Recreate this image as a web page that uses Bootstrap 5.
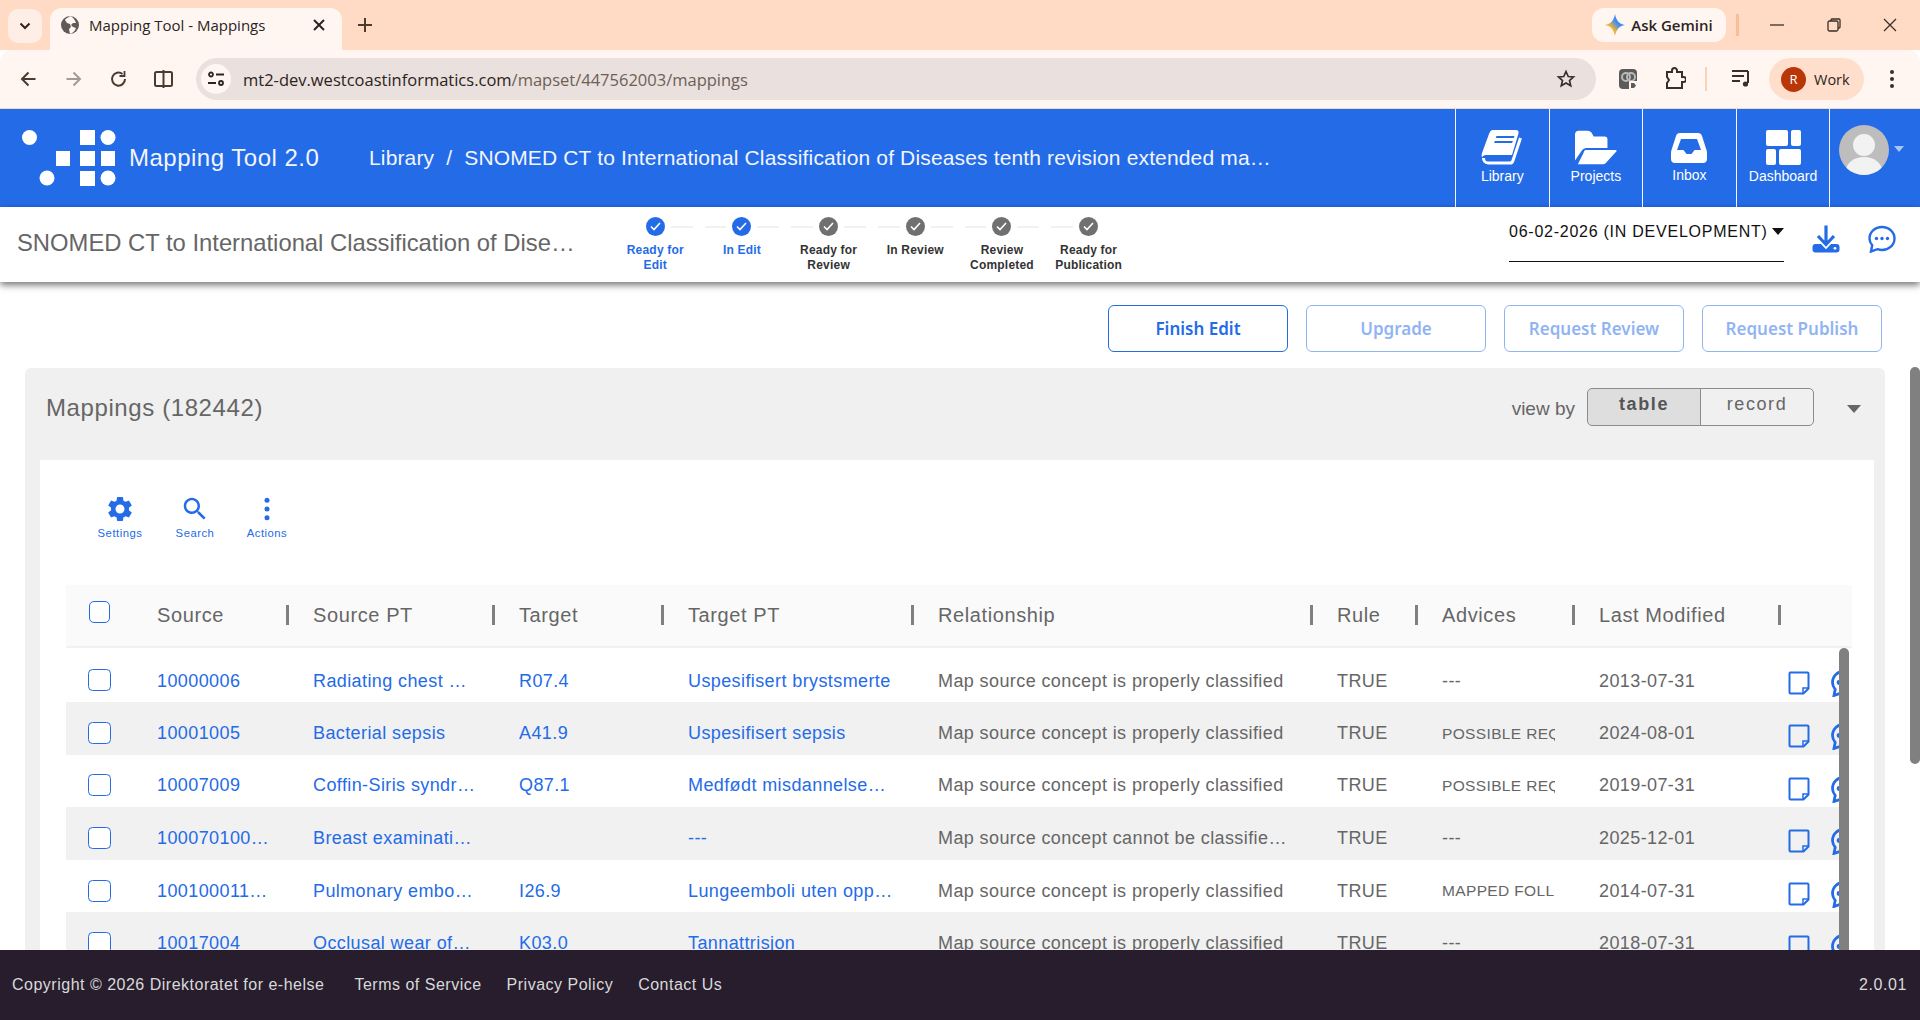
<!DOCTYPE html>
<html lang="en">
<head>
<meta charset="utf-8">
<title>Mapping Tool - Mappings</title>
<link href="https://cdn.jsdelivr.net/npm/bootstrap@5.3.0/dist/css/bootstrap.min.css" rel="stylesheet">
<style>
:root{--brand:#246be8;--chrome-ink:#4a3a30;--ui:"Liberation Sans",Arial,sans-serif;--seg:"Open Sans","Noto Sans",sans-serif}
html,body{height:100%;overflow:hidden}
body{font-family:var(--ui);background:#fff;color:#666}
.flex-none{flex:none}
.app-shell{height:1020px}
.tabstrip{height:50px;background:#ffdbc6;padding:8px 0 0 8px}
.tab-menu{width:34px;height:34px;margin:1px 8px 0 0;border-radius:10px;background:#ffeee5}
.tab-active{width:292px;height:42px;border-radius:12px 12px 0 0;background:#fff6f2;padding:0 16px 8px 10px;font:400 15px var(--seg);color:#2b2420}
.tab-active .tab-label{margin-left:1px}
.tab-plus{margin-left:4px;margin-top:-1px}
.gem-pill{height:34px;width:134px;margin-right:10px;background:#fff6f2;border-radius:12px;font:600 15px var(--seg);color:#2b2420;gap:6px}
.tb-sep{width:3px;height:22px;background:#fbbd94;margin:6px 31px 0 0}
.win-ctl{gap:42.5px;margin:10px 23px 0 0}
.toolbar{height:59px;background:#fff6f2;border-bottom:1px solid #ead9cf;border-radius:12px 12px 0 0;padding:0 0 0 15px}
.nav-ico{width:27px;margin-right:18px}
.nav-ico.last{margin-right:19px}
.omnibox{width:1400px;height:42px;background:#eae0dd;border-radius:21px;padding:0 20px 0 5px;font:400 16.5px var(--seg);color:#6d5f58}
.omnibox b{font-weight:400;color:#2b2420}
.site-chip{width:30px;height:30px;border-radius:50%;background:#fff6f2;margin-right:12px}
.ext-a{margin-left:22px}
.ext-b{margin-left:24px}
.tb-thin{height:24px;width:2px;margin:0 0 0 19px;background:#fbd2b8}
.ext-c{margin-left:24px}
.work-pill{width:95px;height:42px;background:#ffdfcc;border-radius:21px;margin-left:16px;padding-left:12px;font:400 14.5px var(--seg);color:#2b2420;gap:8px}
.avatar-r{width:25px;height:25px;border-radius:50%;background:#b93608;color:#fff;font-size:13px}
.ext-d{margin-left:25px}
.app-bar{height:98px;background:var(--brand);padding:0;flex-wrap:nowrap}
.brand-mark{margin-left:22px;width:94px;height:56px;flex:none}
.brand-name{font-size:24px;color:#f2f6ff;margin:0 0 0 13px;width:240px;flex:none;padding:0;letter-spacing:.5px}
.crumbs{margin:0;font-size:21px;width:930px;flex-wrap:nowrap;letter-spacing:.15px;--bs-breadcrumb-divider-color:#eaf0ff;--bs-breadcrumb-item-padding-x:12px}
.crumbs .breadcrumb-item,.crumbs a{color:#f2f6ff;text-decoration:none;white-space:nowrap}
.crumbs .breadcrumb-item::before{color:#f2f6ff}
.crumbs .trail-long{width:843px;overflow:hidden;display:flex}
.crumbs .trail-long span{overflow:hidden;text-overflow:ellipsis}
.menu-wrap{width:465px}
.menu-item{width:93.6px;height:98px;border-left:1px solid #f4f7ff;color:#fff;font-size:14px;padding-top:21px;text-decoration:none;flex:none}
.menu-item svg{display:block;height:35px;margin-bottom:1px}
.menu-item svg.tray{height:30px;margin:3px 0 2px}
.profile{border-left:1px solid #f4f7ff;height:98px;flex:1;padding:16px 0 0 9px;gap:5px}
.avatar-img{width:50px;height:50px;flex:none}
.caret-pale{width:0;height:0;border:5px solid transparent;border-top:6px solid #a9c4f5;border-bottom:0;margin-top:21px}
.subhead{height:75px;background:#fff;box-shadow:0 3px 7px rgba(0,0,0,.55);position:relative;z-index:2;flex:none}
.map-title{width:612px;padding:0 37px 0 17px;font-size:23.8px;color:#666;flex:none;margin-top:-3px}
.stepper{width:520px;flex:none;padding-top:10px;align-self:flex-start}
.step{width:86.66px;font-size:12px;line-height:15px;text-align:center;font-weight:700;color:#333;letter-spacing:.2px}
.step-top{height:19px;margin-bottom:7px}
.step-line{flex:1;height:2px;background:#f1f1f1;margin:0 6px}
.step-line.off{background:transparent}
.step-dot{width:19px;height:19px;flex:none;border-radius:50%;background:#707070}
.step.on{color:var(--brand)}
.step.on .step-dot{background:var(--brand)}
.version-pick{width:275px;height:55px;margin-left:377px;border-bottom:1px solid #111;color:#111;font-size:16px;letter-spacing:.75px;padding-top:15px;line-height:20px;flex:none;align-self:flex-start}
.caret-ink{width:0;height:0;border:6px solid transparent;border-top:7px solid #111;border-bottom:0;margin:6px 0 0 4px;flex:none}
.sub-acts{margin-left:28px;gap:28px;margin-top:-11px}
.page-row{min-height:0;overflow:hidden}
.page-main{width:1910px;padding:23px 25px 0;flex:none}
.act-row{gap:18px;padding-right:3px;margin-bottom:16px}
.act-btn{width:180px;height:47px;font:600 17px "Noto Sans",sans-serif;--bs-btn-color:var(--brand);--bs-btn-border-color:var(--brand);--bs-btn-border-radius:6px;--bs-btn-disabled-color:var(--brand);--bs-btn-disabled-border-color:var(--brand);--bs-btn-disabled-opacity:.5}
.panel{background:#f0f0f0;border-radius:6px 6px 0 0;padding:0 11px 0 15px}
.panel-top{height:92px;padding:0 0 12px 6px}
.panel-title{font-size:24px;color:#666;margin:0;font-weight:400;letter-spacing:.6px}
.view-by{font-size:19px;color:#666;margin-right:12px;margin-top:3px}
.view-group{width:228px;height:38px;margin-top:-2px;margin-right:-1px}
.view-group .view-btn{flex:0 0 50%;font-size:18px;letter-spacing:1.6px;color:#666;--bs-btn-border-color:#8c8c8c;--bs-btn-border-radius:5px;padding:0 0 5px;background:#f0f0f0}
.view-group .view-btn.sel{background:#dedede;font-weight:700;color:#555}
.caret-grey{width:0;height:0;border:7px solid transparent;border-top:8px solid #666;border-bottom:0;margin:1px 13px 0 33px}
.sheet{background:#fff;padding:0 22px 0 26px;height:600px}
.tools{height:125px;padding:34px 0 0 24px}
.tool{width:60px;color:var(--brand);font-size:11.3px;text-align:center;letter-spacing:.5px;text-decoration:none;line-height:14px}
.tool svg{display:block;margin:0 auto 2px}
.tool.tool-s{margin-left:15px}
.tool.tool-b{margin-left:12px}
.grid-cols col:nth-child(1){width:79px}
.grid-cols col:nth-child(2){width:156px}
.grid-cols col:nth-child(3){width:206px}
.grid-cols col:nth-child(4){width:169px}
.grid-cols col:nth-child(5){width:250px}
.grid-cols col:nth-child(6){width:399px}
.grid-cols col:nth-child(7){width:105px}
.grid-cols col:nth-child(8){width:157px}
.grid-cols col:nth-child(9){width:200px}
.grid-cols col:nth-child(10){width:65px}
.data-head{width:1786px;table-layout:fixed;margin:0;border-collapse:collapse}
.data-head th{height:62px;background:#fafafa;border-bottom:2px solid #f1f1f1;font-weight:400;font-size:20px;color:#666;padding:0 12px 2px 12px;letter-spacing:.6px;vertical-align:middle}
.data-head th.cb-cell{padding:0 0 0 23px}
.data-head th.tight{padding-right:6px}
.col-sep{width:3px;height:20px;background:#808080;flex:none}
.body-row{height:400px}
.body-clip{width:1773px;overflow:hidden;flex:none}
.data-body{width:1786px;table-layout:fixed;margin:0;border-collapse:collapse}
.data-body td{height:52.6px;padding:10px 12px 0;font-size:18px;color:#666;letter-spacing:.4px;border:0;white-space:nowrap;overflow:hidden;vertical-align:middle}
.data-body tr:nth-child(even) td{background:#f1f1f1}
.data-body a{color:var(--brand);text-decoration:none}
.data-body tr:first-child td{height:54px;padding-top:12px}
.data-body tr td.cb-cell{padding:14px 0 0 22px}
.data-body tr td.ico-cell{padding:16px 0 0}
.advice{width:113px;overflow:hidden;font-size:15.5px;letter-spacing:.35px}
.tick{width:23px;height:22px;margin:0;border:1px solid var(--brand);border-radius:4px;background-color:#fff;float:none}
.data-head .tick{width:21px;margin-bottom:5px}
.cell-icons{gap:21px;width:80px}
.thumb-in{width:10px;flex:none;background:#808080;border-radius:5px 5px 0 0}
.thumb-out{width:10px;height:397px;margin-top:85px;background:#808080;border-radius:5px;flex:none}
.site-foot{height:70px;flex:none;background:#271d2d;color:#d9d9d9;font-size:16px;letter-spacing:.5px;padding:0 13px 0 12px}
.site-foot a{color:#d9d9d9;text-decoration:none;margin-left:25px}
.site-foot a:first-of-type{margin-left:30px}
.site-foot .ver{letter-spacing:.6px}
</style>
</head>
<body>
<div class="app-shell d-flex flex-column">

  <div class="tabstrip d-flex flex-none">
    <div class="tab-menu d-flex align-items-center justify-content-center">
      <svg width="14" height="14" viewBox="0 0 14 14" fill="none" stroke="#2b2420" stroke-width="2"><path d="M2.5 4.5 7 9l4.5-4.5"/></svg>
    </div>
    <div class="tab-active d-flex align-items-center">
      <svg width="20" height="20" viewBox="0 0 20 20" class="me-2 flex-none"><circle cx="10" cy="10" r="9" fill="#5f5a57"/><path d="M10 1c-2 2-4 2-5 4l2 3 3 1 1 3-2 2 1 5c3-1 5-3 6-6l-3-1-2-2 2-2 3 0c-1-3-3-6-6-7z" fill="#fff6f2"/></svg>
      <span class="tab-label flex-grow-1">Mapping Tool - Mappings</span>
      <svg width="14" height="14" viewBox="0 0 14 14" stroke="#2b2420" stroke-width="2"><path d="M2 2l10 10M12 2 2 12"/></svg>
    </div>
    <svg class="tab-plus" width="38" height="36" viewBox="0 0 38 36" stroke="#4a3a30" stroke-width="2"><path d="M19 11v14M12 18h14"/></svg>
    <div class="ms-auto d-flex align-items-start">
      <div class="gem-pill d-flex align-items-center justify-content-center">
        <svg width="20" height="22" viewBox="0 0 20 22"><defs><linearGradient id="gm" x1="0" y1="1" x2="1" y2="0"><stop offset="0" stop-color="#e8463f"/><stop offset=".35" stop-color="#f2b632"/><stop offset=".6" stop-color="#3f8df5"/><stop offset="1" stop-color="#3f6af5"/></linearGradient></defs><path d="M10 0c1 6 4 10 10 11-6 1-9 5-10 11C9 16 6 12 0 11 6 10 9 6 10 0z" fill="url(#gm)"/></svg>
        <span>Ask Gemini</span>
      </div>
      <div class="tb-sep"></div>
      <div class="win-ctl d-flex align-items-center">
        <svg width="14" height="14" viewBox="0 0 14 14" stroke="#3a2f28" stroke-width="1.3"><path d="M0 7h14"/></svg>
        <svg width="14" height="14" viewBox="0 0 14 14" fill="none" stroke="#3a2f28" stroke-width="1.3"><rect x="1" y="3" width="10" height="10" rx="1.5"/><path d="M4 3V2a1 1 0 0 1 1-1h7a1 1 0 0 1 1 1v7a1 1 0 0 1-1 1h-1"/></svg>
        <svg width="14" height="14" viewBox="0 0 14 14" stroke="#3a2f28" stroke-width="1.3"><path d="M1 1l12 12M13 1 1 13"/></svg>
      </div>
    </div>
  </div>

  <div class="toolbar d-flex align-items-center flex-none">
    <svg class="nav-ico" width="20" height="20" viewBox="0 0 20 20" fill="none" stroke="#4a3a30" stroke-width="2"><path d="M17 10H4M10 3.5 3.5 10l6.5 6.500"/></svg>
    <svg class="nav-ico" width="20" height="20" viewBox="0 0 20 20" fill="none" stroke="#a59a93" stroke-width="2"><path d="M3 10h13M10 3.5l6.5 6.5-6.5 6.5"/></svg>
    <svg class="nav-ico" width="20" height="20" viewBox="0 0 20 20" fill="none" stroke="#4a3a30" stroke-width="2"><path d="M16.5 10A6.5 6.500 0 1 1 14 5"/><path d="M16 2v5h-5" stroke-width="1.8"/></svg>
    <svg class="nav-ico last" width="20" height="20" viewBox="0 0 20 20" fill="none" stroke="#4a3a30" stroke-width="2"><rect x="1.5" y="3" width="17" height="14" rx="1.5"/><path d="M10 1v18"/></svg>
    <div class="omnibox d-flex align-items-center flex-none">
      <span class="site-chip d-flex align-items-center justify-content-center flex-none">
        <svg width="18" height="16" viewBox="0 0 18 16" fill="none" stroke="#2b2420" stroke-width="1.8"><circle cx="4" cy="3.5" r="2"/><path d="M9 3.5h8M1 12h8"/><circle cx="14" cy="12" r="2"/></svg>
      </span>
      <span class="flex-grow-1"><b>mt2-dev.westcoastinformatics.com</b>/mapset/447562003/mappings</span>
      <svg width="20" height="20" viewBox="0 0 24 24" fill="none" stroke="#3a2f28" stroke-width="2"><path d="M12 3l2.7 6 6.3.6-4.8 4.2 1.5 6.4L12 16.8l-5.700 3.4 1.5-6.4L3 9.600 9.300 9z"/></svg>
    </div>
    <svg class="ext-a flex-none" width="22" height="24" viewBox="0 0 22 24"><rect x="1" y="2" width="18" height="20" rx="4" fill="#5b5b5b"/><circle cx="8" cy="10" r="4" fill="none" stroke="#b9b9b9" stroke-width="2"/><circle cx="13" cy="10" r="4" fill="none" stroke="#b9b9b9" stroke-width="2"/><rect x="11" y="14" width="9" height="9" rx="1" fill="#fff6f2"/><path d="M13 16v5h3l2-2.500-2-2.500z" fill="#5b5b5b"/></svg>
    <svg class="ext-b flex-none" width="22" height="24" viewBox="0 0 22 24" fill="none" stroke="#3a2f28" stroke-width="2"><path d="M3 5h5V3.500a2.500 2.500 0 0 1 5 0V5h5v5h1.500a2.500 2.500 0 0 1 0 5H18v6H3v-5l2-3-2-3z"/></svg>
    <div class="tb-thin flex-none"></div>
    <svg class="ext-c flex-none" width="22" height="20" viewBox="0 0 22 20" fill="none" stroke="#3a2f28" stroke-width="2"><path d="M1 2h16M1 7h12M1 12h8"/><path d="M17 2v12"/><circle cx="14.5" cy="15" r="2.6" fill="#3a2f28" stroke="none"/></svg>
    <div class="work-pill d-flex align-items-center flex-none">
      <span class="avatar-r d-flex align-items-center justify-content-center">R</span><span>Work</span>
    </div>
    <svg class="ext-d flex-none" width="6" height="20" viewBox="0 0 6 20" fill="#3a2f28"><circle cx="3" cy="3" r="2"/><circle cx="3" cy="10" r="2"/><circle cx="3" cy="17" r="2"/></svg>
  </div>

  <nav class="navbar app-bar flex-none">
    <svg class="brand-mark" viewBox="0 0 94 56" fill="#fff">
      <circle cx="7.5" cy="7.5" r="7.5"/><rect x="58" y="0" width="15" height="15"/><circle cx="86" cy="7.5" r="7.5"/>
      <rect x="34" y="21" width="14" height="15"/><rect x="58" y="21" width="15" height="15"/><rect x="79" y="21" width="14" height="15"/>
      <circle cx="25" cy="48" r="7.5"/><rect x="58" y="41" width="15" height="15"/><circle cx="86" cy="48" r="7.5"/>
    </svg>
    <span class="navbar-brand brand-name">Mapping Tool 2.0</span>
    <ol class="breadcrumb crumbs">
      <li class="breadcrumb-item"><a href="#">Library</a></li>
      <li class="breadcrumb-item active trail-long"><span>SNOMED CT to International Classification of Diseases tenth revision extended mapping set</span></li>
    </ol>
    <div class="menu-wrap d-flex align-items-start ms-auto flex-none">
      <a href="#" class="menu-item d-flex flex-column align-items-center">
        <svg width="42" height="35" viewBox="0 0 42 35"><path fill="#fff" d="M12 0h23c2 0 3 1.500 2.500 3.500L31 25H5c-2 0-3.500 1-4 2.500C.5 26 .5 25 1 23L8 4C9 1.500 10 0 12 0z"/><path fill="none" stroke="#fff" stroke-width="3" d="M2.500 28c0 2.500 1.500 5 4.500 5h22c1.500 0 2.500-.7 3-2.500L39.500 8"/><path fill="#246be8" d="M15.500 6h18l-.7 2h-18zM13.800 11h18l-.7 2h-18z"/></svg>
        Library
      </a>
      <a href="#" class="menu-item d-flex flex-column align-items-center">
        <svg width="42" height="35" viewBox="0 0 44 35" fill="#fff"><path d="M0 4a4 4 0 0 1 4-4h9c3 0 4 1.500 5 3l1.500 3H31a3 3 0 0 1 3 3v9H12c-2 0-3.500 1-5 3L0 31z"/><path d="M11 20h31c1.500 0 2 .7 1.500 1.500L33 33c-1 1.300-2 2-3.500 2H3l6-12c.5-1.500 1-3 2-3z"/></svg>
        Projects
      </a>
      <a href="#" class="menu-item d-flex flex-column align-items-center">
        <svg class="tray" width="36" height="30" viewBox="0 0 36 30" fill="#fff"><path fill-rule="evenodd" d="M9 0h18c2 0 3.500 1 4 3l4.500 14c.3 1 .5 2 .5 3v6c0 2.500-1.500 4-4 4H4c-2.500 0-4-1.500-4-4v-6c0-1 .2-2 .5-3L5 3c.5-2 2-3 4-3zM10 6 6 17h6.500l3 4h5l3-4H30L26 6z"/></svg>
        Inbox
      </a>
      <a href="#" class="menu-item d-flex flex-column align-items-center">
        <svg width="35" height="35" viewBox="0 0 35 35" fill="#fff"><rect width="22" height="16" rx="2"/><rect x="25" width="10" height="16" rx="2"/><rect y="19" width="10" height="16" rx="2"/><rect x="13" y="19" width="22" height="16" rx="2"/></svg>
        Dashboard
      </a>
      <div class="profile d-flex align-items-start">
        <svg class="avatar-img" viewBox="0 0 50 50"><defs><clipPath id="av"><circle cx="25" cy="25" r="25"/></clipPath></defs><circle cx="25" cy="25" r="25" fill="#bdbdbd"/><g clip-path="url(#av)" fill="#f2f2f2"><circle cx="25" cy="20" r="11"/><ellipse cx="25" cy="46" rx="18" ry="14"/></g></svg>
        <span class="caret-pale"></span>
      </div>
    </div>
  </nav>

  <header class="subhead d-flex align-items-center">
    <div class="map-title text-truncate">SNOMED CT to International Classification of Diseases tenth revision extended mapping set</div>
    <div class="stepper d-flex">
      <div class="step on"><div class="step-top d-flex align-items-center"><i class="step-line off"></i><span class="step-dot d-flex align-items-center justify-content-center"><svg width="11" height="9" viewBox="0 0 11 9" fill="none" stroke="#fff" stroke-width="1.6"><path d="M1 4.500 4 7.500 10 1"/></svg></span><i class="step-line"></i></div>Ready for<br>Edit</div>
      <div class="step on"><div class="step-top d-flex align-items-center"><i class="step-line"></i><span class="step-dot d-flex align-items-center justify-content-center"><svg width="11" height="9" viewBox="0 0 11 9" fill="none" stroke="#fff" stroke-width="1.6"><path d="M1 4.500 4 7.500 10 1"/></svg></span><i class="step-line"></i></div>In Edit</div>
      <div class="step"><div class="step-top d-flex align-items-center"><i class="step-line"></i><span class="step-dot d-flex align-items-center justify-content-center"><svg width="11" height="9" viewBox="0 0 11 9" fill="none" stroke="#fff" stroke-width="1.6"><path d="M1 4.500 4 7.500 10 1"/></svg></span><i class="step-line"></i></div>Ready for<br>Review</div>
      <div class="step"><div class="step-top d-flex align-items-center"><i class="step-line"></i><span class="step-dot d-flex align-items-center justify-content-center"><svg width="11" height="9" viewBox="0 0 11 9" fill="none" stroke="#fff" stroke-width="1.6"><path d="M1 4.500 4 7.500 10 1"/></svg></span><i class="step-line"></i></div>In Review</div>
      <div class="step"><div class="step-top d-flex align-items-center"><i class="step-line"></i><span class="step-dot d-flex align-items-center justify-content-center"><svg width="11" height="9" viewBox="0 0 11 9" fill="none" stroke="#fff" stroke-width="1.6"><path d="M1 4.500 4 7.500 10 1"/></svg></span><i class="step-line"></i></div>Review<br>Completed</div>
      <div class="step"><div class="step-top d-flex align-items-center"><i class="step-line"></i><span class="step-dot d-flex align-items-center justify-content-center"><svg width="11" height="9" viewBox="0 0 11 9" fill="none" stroke="#fff" stroke-width="1.6"><path d="M1 4.500 4 7.500 10 1"/></svg></span><i class="step-line off"></i></div>Ready for<br>Publication</div>
    </div>
    <div class="version-pick d-flex align-items-start"><span class="text-nowrap">06-02-2026 (IN DEVELOPMENT)</span><span class="caret-ink"></span></div>
    <div class="sub-acts d-flex align-items-center">
      <svg width="28" height="28" viewBox="0 0 28 28"><rect x=".5" y="19" width="27" height="8.500" rx="3" fill="#246be8"/><circle cx="23" cy="23.300" r="1.400" fill="#fff"/><path d="M6 11l8 8.500 8-8.500" fill="none" stroke="#fff" stroke-width="6.500"/><path d="M14 .5V20M6 11l8 8.500 8-8.500" fill="none" stroke="#246be8" stroke-width="3.200"/></svg>
      <svg width="28" height="28" viewBox="0 0 28 28" fill="none" stroke="#246be8" stroke-width="2.400"><path d="M14 2c7 0 12.500 5 12.500 11.500S21 25 14 25c-1.500 0-3-.3-4.500-.8L3 26.500l1.200-6.200C2.500 18.300 1.500 16 1.500 13.500 1.500 7 7 2 14 2z"/><g fill="#246be8" stroke="none"><circle cx="8.500" cy="13.500" r="1.700"/><circle cx="14" cy="13.500" r="1.700"/><circle cx="19.500" cy="13.500" r="1.700"/></g></svg>
    </div>
  </header>

  <div class="page-row d-flex flex-grow-1">
    <main class="page-main">
      <div class="act-row d-flex justify-content-end">
        <button class="btn btn-outline-primary act-btn" type="button">Finish Edit</button>
        <button class="btn btn-outline-primary act-btn" type="button" disabled>Upgrade</button>
        <button class="btn btn-outline-primary act-btn" type="button" disabled>Request Review</button>
        <button class="btn btn-outline-primary act-btn" type="button" disabled>Request Publish</button>
      </div>
      <section class="panel">
        <div class="panel-top d-flex align-items-center">
          <h2 class="panel-title">Mappings (182442)</h2>
          <span class="view-by ms-auto">view by</span>
          <div class="btn-group view-group" role="group">
            <button type="button" class="btn view-btn sel">table</button>
            <button type="button" class="btn view-btn">record</button>
          </div>
          <span class="caret-grey"></span>
        </div>
        <div class="sheet">
          <div class="tools d-flex align-items-start">
            <a href="#" class="tool"><svg width="30" height="30" viewBox="0 0 24 24" fill="#246be8"><path d="M19.14 12.940c.04-.3.06-.61.06-.94 0-.32-.02-.64-.07-.94l2.030-1.580c.18-.14.23-.41.12-.61l-1.920-3.320c-.12-.22-.37-.29-.59-.22l-2.390.96c-.5-.38-1.030-.7-1.620-.94l-.36-2.540c-.04-.24-.24-.41-.48-.41h-3.840c-.24 0-.43.17-.47.41l-.36 2.540c-.59.24-1.130.57-1.620.94l-2.390-.96c-.22-.08-.47 0-.59.22L2.740 8.870c-.12.21-.08.47.12.61l2.030 1.580c-.05.3-.09.63-.09.94s.02.64.07.94l-2.030 1.580c-.18.14-.23.41-.12.61l1.920 3.320c.12.22.37.29.59.22l2.390-.96c.5.38 1.030.7 1.620.94l.36 2.540c.05.24.24.41.48.41h3.840c.24 0 .44-.17.47-.41l.36-2.540c.59-.24 1.130-.56 1.620-.94l2.390.96c.22.08.47 0 .59-.22l1.920-3.320c.12-.22.07-.47-.12-.61l-2.010-1.580zM12 15.600c-1.980 0-3.600-1.620-3.600-3.600s1.620-3.600 3.600-3.600 3.600 1.620 3.600 3.600-1.620 3.600-3.600 3.600z"/></svg>Settings</a>
            <a href="#" class="tool tool-s"><svg width="30" height="30" viewBox="0 0 24 24" fill="#246be8"><path d="M15.500 14h-.79l-.28-.27C15.410 12.590 16 11.110 16 9.500 16 5.910 13.090 3 9.500 3S3 5.910 3 9.500 5.910 16 9.500 16c1.610 0 3.090-.59 4.230-1.570l.27.28v.79l5 4.990L20.490 19l-4.990-5zm-6 0C7.010 14 5 11.990 5 9.500S7.010 5 9.500 5 14 7.010 14 9.500 11.990 14 9.500 14z"/></svg>Search</a>
            <a href="#" class="tool tool-b"><svg width="30" height="30" viewBox="0 0 24 24" fill="#246be8"><circle cx="12" cy="5" r="2"/><circle cx="12" cy="12" r="2"/><circle cx="12" cy="19" r="2"/></svg>Actions</a>
          </div>
          <table class="table data-head grid-cols">
            <colgroup><col><col><col><col><col><col><col><col><col><col></colgroup>
            <thead><tr>
              <th class="cb-cell"><input class="form-check-input tick" type="checkbox" aria-label="Select all"></th>
              <th><div class="d-flex justify-content-between align-items-center">Source<i class="col-sep"></i></div></th>
              <th><div class="d-flex justify-content-between align-items-center">Source PT<i class="col-sep"></i></div></th>
              <th><div class="d-flex justify-content-between align-items-center">Target<i class="col-sep"></i></div></th>
              <th><div class="d-flex justify-content-between align-items-center">Target PT<i class="col-sep"></i></div></th>
              <th><div class="d-flex justify-content-between align-items-center">Relationship<i class="col-sep"></i></div></th>
              <th><div class="d-flex justify-content-between align-items-center">Rule<i class="col-sep"></i></div></th>
              <th><div class="d-flex justify-content-between align-items-center">Advices<i class="col-sep"></i></div></th>
              <th class="tight"><div class="d-flex justify-content-between align-items-center">Last Modified<i class="col-sep"></i></div></th>
              <th></th>
            </tr></thead>
          </table>
          <div class="body-row d-flex">
            <div class="body-clip">
              <table class="table data-body grid-cols">
                <colgroup><col><col><col><col><col><col><col><col><col><col></colgroup>
                <tbody id="rows"></tbody>
              </table>
            </div>
            <div class="thumb-in"></div>
          </div>
        </div>
      </section>
    </main>
    <div class="thumb-out"></div>
  </div>

  <footer class="site-foot d-flex align-items-center">
    <span>Copyright © 2026 Direktoratet for e-helse</span>
    <a href="#">Terms of Service</a><a href="#">Privacy Policy</a><a href="#">Contact Us</a>
    <span class="ver ms-auto">2.0.01</span>
  </footer>
</div>
<script src="https://cdn.jsdelivr.net/npm/bootstrap@5.3.0/dist/js/bootstrap.bundle.min.js"></script>
<script>
const OK='Map source concept is properly classified';
const data=[
['10000006','Radiating chest …','R07.4','Uspesifisert brystsmerte',OK,'---','2013-07-31'],
['10001005','Bacterial sepsis','A41.9','Uspesifisert sepsis',OK,'POSSIBLE REQUIREMENT FOR ADDITIONAL CODE','2024-08-01'],
['10007009','Coffin-Siris syndr…','Q87.1','Medfødt misdannelse…',OK,'POSSIBLE REQUIREMENT FOR ADDITIONAL CODE','2019-07-31'],
['100070100…','Breast examinati…','','---','Map source concept cannot be classifie…','---','2025-12-01'],
['100100011…','Pulmonary embo…','I26.9','Lungeemboli uten opp…',OK,'MAPPED FOLLOWING WHO GUIDANCE','2014-07-31'],
['10017004','Occlusal wear of…','K03.0','Tannattrisjon',OK,'---','2018-07-31']];
const note='<svg class="flex-none" width="23" height="24" viewBox="0 0 23 24" fill="none" stroke="#246be8" stroke-width="2"><path d="M2.500 1.500h18a1 1 0 0 1 1 1v15l-5 5h-13a1 1 0 0 1-1-1v-19a1 1 0 0 1 1-1z"/><path d="M16 22.500v-5.500h5.500" stroke-width="1.500"/></svg>';
const chat='<svg class="flex-none" width="28" height="28" viewBox="0 0 28 28" fill="none" stroke="#246be8" stroke-width="2.800"><path d="M14 2c7 0 12.500 5 12.500 11.500S21 25 14 25c-1.500 0-3-.3-4.500-.8L3 26.500l1.200-6.200C2.500 18.300 1.500 16 1.500 13.500 1.500 7 7 2 14 2z"/><circle cx="8" cy="13.500" r="1" fill="#246be8"/></svg>';
document.getElementById('rows').innerHTML=data.map(r=>{
  const adv=r[5].length>3?'<div class="advice">'+r[5]+'</div>':r[5];
  return '<tr><td class="cb-cell"><input class="form-check-input tick" type="checkbox" aria-label="Select row"></td>'
  +'<td><a href="#">'+r[0]+'</a></td><td><a href="#">'+r[1]+'</a></td><td><a href="#">'+r[2]+'</a></td>'
  +'<td><a href="#">'+r[3]+'</a></td><td>'+r[4]+'</td><td>TRUE</td><td>'+adv+'</td><td>'+r[6]+'</td>'
  +'<td class="ico-cell"><div class="cell-icons d-flex align-items-center">'+note+chat+'</div></td></tr>';
}).join('');
</script>
</body>
</html>
